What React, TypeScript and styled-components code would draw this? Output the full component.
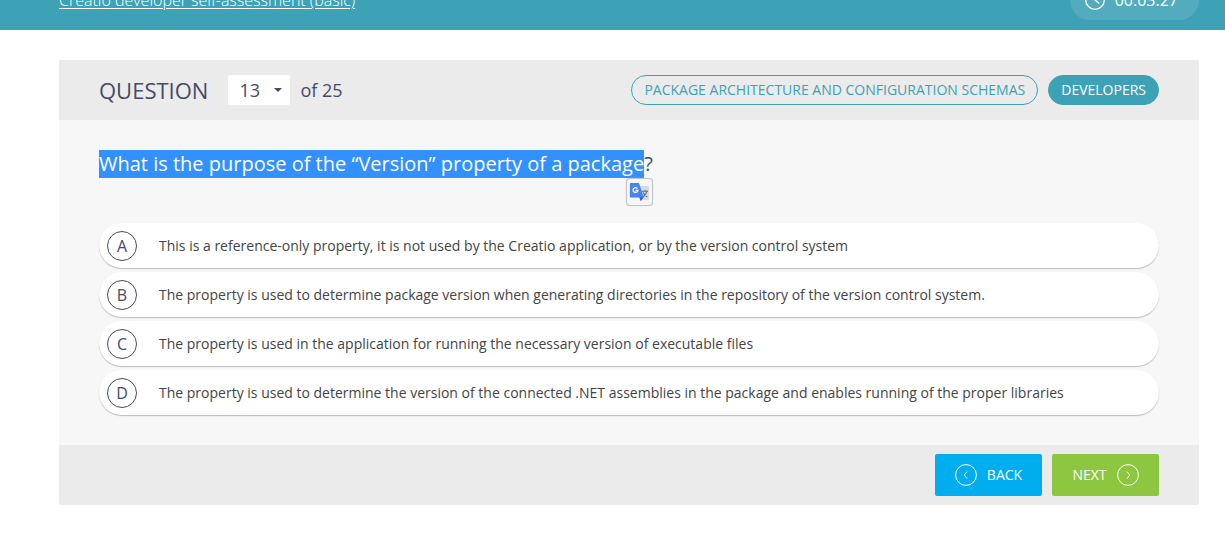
import React, { useState } from "react";
import styled, { createGlobalStyle } from "styled-components";

const teal = "#3da2b5";
const ink = "#444b66";

const GlobalStyle = createGlobalStyle`
  *, *::before, *::after { box-sizing: border-box; }
  body {
    margin: 0;
    background: #fff;
    color: ${ink};
    font-family: "Open Sans", "Noto Sans", sans-serif;
    font-size: 14px;
  }
  button, select, input { font: inherit; margin: 0; }
`;

const TopBar = styled.header`
  display: flex;
  justify-content: space-between;
  align-items: flex-end;
  height: 30px;
  padding: 0 26px 10px 59px;
  overflow: hidden;
  background: ${teal};
  color: #fff;
`;

const CourseLink = styled.a`
  flex-shrink: 0;
  color: inherit;
  font-size: 16px;
  font-weight: 300;
  line-height: 40px;
  text-decoration: underline 1px;
  text-underline-offset: 2px;
`;

const Timer = styled.div`
  display: flex;
  flex-shrink: 0;
  align-items: center;
  gap: 10px;
  height: 40px;
  padding: 0 21px 0 15px;
  border-radius: 20px;
  background: #52acbd;
  font-size: 16px;
`;

const Page = styled.main`
  padding: 30px 26px 36px 59px;
`;

const Card = styled.section`
  border-radius: 2px;
  overflow: hidden;
  background: #f7f7f7;
`;

const CardHeader = styled.div`
  display: flex;
  justify-content: space-between;
  align-items: center;
  min-height: 60px;
  padding: 0 40px;
  background: #ebebeb;
`;

const Counter = styled.div`
  display: flex;
  align-items: center;
  font-size: 18px;
`;

const CounterLabel = styled.label`
  margin-right: 20px;
  font-size: 22px;
`;

const SelectBox = styled.div`
  display: grid;
  align-items: center;
  width: 62px;
  height: 30px;
  margin-right: 10px;

  > * { grid-area: 1 / 1; }
  > svg { justify-self: end; margin-right: 8px; pointer-events: none; }
`;

const NumberSelect = styled.select`
  appearance: none;
  width: 100%;
  height: 30px;
  padding: 0 11px;
  border: 0;
  border-radius: 2px;
  background: #fff;
  color: ${ink};
`;

const Tags = styled.div`
  display: flex;
  gap: 10px;
`;

const Tag = styled.span<{ $filled?: boolean }>`
  padding: 0 12px;
  border: 1px solid ${teal};
  border-radius: 15px;
  background: ${(p) => (p.$filled ? teal : "transparent")};
  color: ${(p) => (p.$filled ? "#fff" : teal)};
  line-height: 28px;
  text-transform: uppercase;
`;

const CardBody = styled.div`
  padding: 30px 40px;
`;

const Prompt = styled.h1`
  margin: 0 0 45px;
  font-size: 20px;
  font-weight: 400;
  line-height: 28px;
`;

const Selected = styled.mark`
  position: relative;
  display: inline-block;
  background: #3390ff;
  color: #fff;
`;

const TranslateButton = styled.button`
  position: absolute;
  top: 100%;
  right: -9px;
  display: grid;
  place-items: center;
  width: 27px;
  height: 28px;
  padding: 0;
  border: 1px solid #c4c4c8;
  border-radius: 4px;
  background: #f6f6f6;
  box-shadow: 0 0 1px #bbb;
`;

const Options = styled.div`
  display: flex;
  flex-direction: column;
  gap: 4px;
`;

const Option = styled.label`
  display: flex;
  align-items: center;
  gap: 22px;
  min-height: 45px;
  padding: 0 8px;
  border-radius: 23px;
  background: #fff;
  box-shadow: 0 1px 1px #bbb;
  color: #444;
  cursor: pointer;
`;

const Choice = styled.span`
  display: grid;
  place-items: center;
  color: ${ink};
  font-size: 16px;
  line-height: 28px;

  > * { grid-area: 1 / 1; }
`;

const Radio = styled.input`
  appearance: none;
  width: 30px;
  height: 30px;
  border: 1px solid ${ink};
  border-radius: 50%;
  &:checked { background: #d9edf1; }
`;

const CardFooter = styled.div`
  display: flex;
  justify-content: flex-end;
  align-items: center;
  gap: 10px;
  min-height: 60px;
  padding: 0 40px;
  background: #ebebeb;
`;

const NavButton = styled.button<{ $color: string }>`
  display: flex;
  align-items: center;
  justify-content: center;
  gap: 10px;
  width: 107px;
  height: 42px;
  padding: 0;
  border: 0;
  border-radius: 2px;
  background: ${(p) => p.$color};
  color: #fff;
  line-height: 20px;
  text-transform: uppercase;
  cursor: pointer;
`;

const Arrow = ({ path }: { path: string }) => (
  <svg width="22" height="22" viewBox="0 0 22 22" fill="none" stroke="#fff" aria-hidden="true">
    <circle cx="11" cy="11" r="10.4" strokeWidth="1" />
    <path d={path} strokeWidth="1" />
  </svg>
);

const ClockIcon = () => (
  <svg width="20" height="20" viewBox="0 0 20 20" fill="none" stroke="#fff" strokeWidth="1.3" aria-hidden="true">
    <circle cx="10" cy="10" r="9.3" />
    <path d="M9.5 4v5.6l4.8 4" />
  </svg>
);

const TranslateIcon = () => (
  <svg width="21" height="20" viewBox="0 0 21 20" aria-hidden="true">
    <path d="M9 4h10.2q.8 0 .8.8v12.4q0 .8-.8.8H12z" fill="#d9dadd" />
    <path d="M10 15h4.8l-3 4.2z" fill="#4b4fc0" />
    <path d="M1.8 1H10l4.8 14.6H1.8q-.9 0-.9-.9V2q0-1 .9-1z" fill="#4285f4" />
    <path d="M8.4 6.6A2.4 2.4 0 1 0 8.9 8.5H6.6" fill="none" stroke="#fff" strokeWidth="1.3" />
    <path d="M13 9.2h6M16 8v1.2M17.8 9.3c-.5 2.3-2 4.2-3.6 5.5M14.2 10.5c.8 1.8 2.3 3.5 4 4.5" fill="none" stroke="#59717b" strokeWidth="1.1" />
  </svg>
);

const answers = [
  "This is a reference-only property, it is not used by the Creatio application, or by the version control system",
  "The property is used to determine package version when generating directories in the repository of the version control system.",
  "The property is used in the application for running the necessary version of executable files",
  "The property is used to determine the version of the connected .NET assemblies in the package and enables running of the proper libraries",
];

const total = 25;

export default function App() {
  const [question, setQuestion] = useState(13);

  return (
    <>
      <GlobalStyle />
      <TopBar>
        <CourseLink href="#">Creatio developer self-assessment (basic)</CourseLink>
        <Timer>
          <ClockIcon />
          <span>00:03:27</span>
        </Timer>
      </TopBar>
      <Page>
        <Card>
          <CardHeader>
            <Counter>
              <CounterLabel htmlFor="question">QUESTION</CounterLabel>
              <SelectBox>
                <NumberSelect id="question" value={question} onChange={(e) => setQuestion(Number(e.target.value))}>
                  {Array.from({ length: total }, (_, i) => (
                    <option key={i} value={i + 1}>{i + 1}</option>
                  ))}
                </NumberSelect>
                <svg width="8" height="4" viewBox="0 0 8 4" aria-hidden="true">
                  <path d="M0 0h8L4 4z" fill={ink} />
                </svg>
              </SelectBox>
              <span>of {total}</span>
            </Counter>
            <Tags>
              <Tag>Package architecture and configuration schemas</Tag>
              <Tag $filled>Developers</Tag>
            </Tags>
          </CardHeader>
          <CardBody>
            <Prompt>
              <Selected>
                What is the purpose of the “Version” property of a package
                <TranslateButton type="button" aria-label="Translate">
                  <TranslateIcon />
                </TranslateButton>
              </Selected>
              ?
            </Prompt>
            <Options role="radiogroup">
              {answers.map((answer, i) => (
                <Option key={answer}>
                  <Choice>
                    <Radio type="radio" name="answer" value={i} />
                    <span>{"ABCD"[i]}</span>
                  </Choice>
                  <span>{answer}</span>
                </Option>
              ))}
            </Options>
          </CardBody>
          <CardFooter>
            <NavButton type="button" $color="#00aeef" onClick={() => setQuestion(Math.max(1, question - 1))}>
              <Arrow path="M12 7.5 9.3 11l2.7 3.5" />
              Back
            </NavButton>
            <NavButton type="button" $color="#8dc63f" onClick={() => setQuestion(Math.min(total, question + 1))}>
              Next
              <Arrow path="m10 7.5 2.7 3.5-2.7 3.5" />
            </NavButton>
          </CardFooter>
        </Card>
      </Page>
    </>
  );
}
